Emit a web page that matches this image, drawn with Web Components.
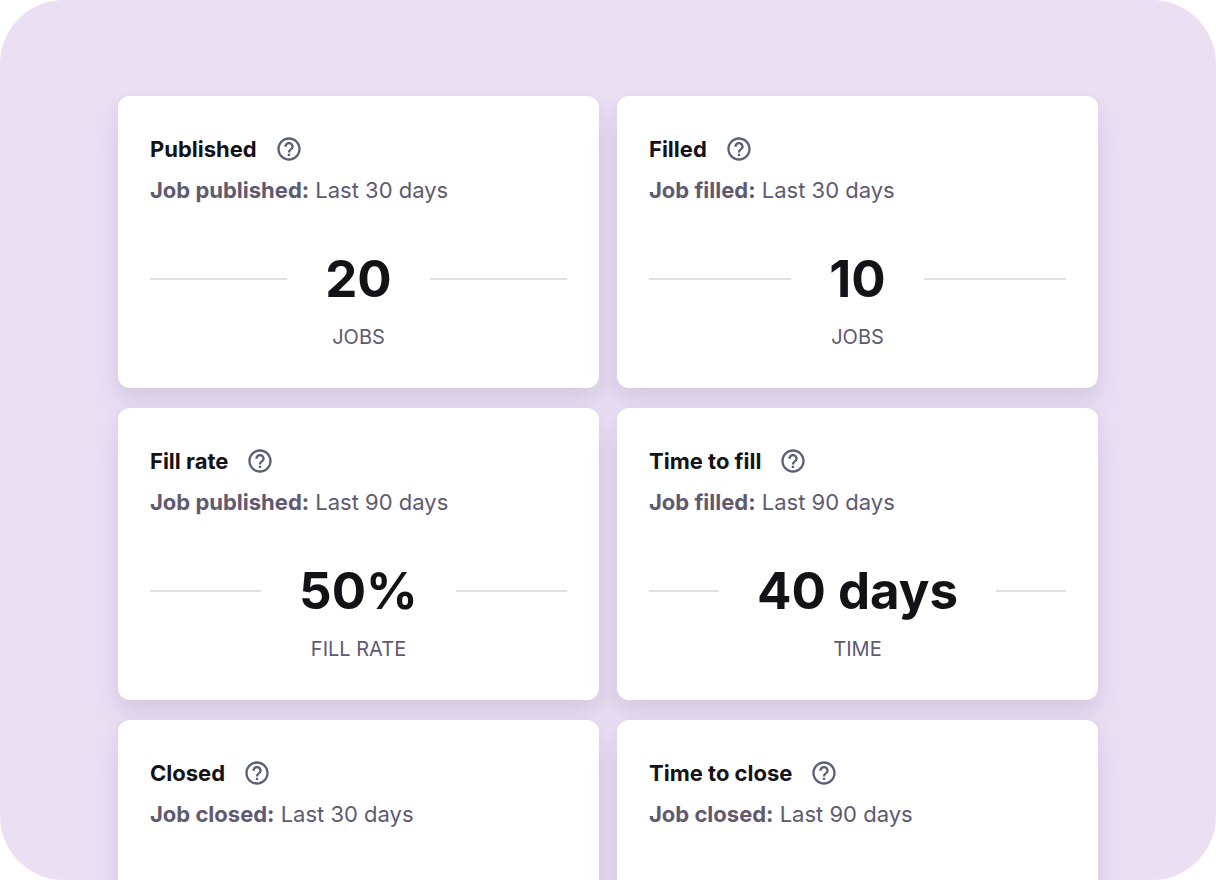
<!DOCTYPE html>
<html lang="en">
<head>
<meta charset="utf-8">
<meta name="viewport" content="width=device-width, initial-scale=1">
<title>Job metrics</title>
<style>
    html, body {
        margin: 0;
        height: 100%;
        background: #fff;
    }
    body {
        font-family: Inter, "Liberation Sans", sans-serif;
        color: #131217;
    }
</style>
</head>
<body>
<metric-board>
    <metric-card heading="Published" value="20" unit="JOBS"><b>Job published:</b> Last 30 days</metric-card>
    <metric-card heading="Filled" value="10" unit="JOBS"><b>Job filled:</b> Last 30 days</metric-card>
    <metric-card heading="Fill rate" value="50%" unit="FILL RATE"><b>Job published:</b> Last 90 days</metric-card>
    <metric-card heading="Time to fill" value="40 days" unit="TIME"><b>Job filled:</b> Last 90 days</metric-card>
    <metric-card heading="Closed"><b>Job closed:</b> Last 30 days</metric-card>
    <metric-card heading="Time to close"><b>Job closed:</b> Last 90 days</metric-card>
</metric-board>

<script>
const boardTemplate = document.createElement("template")
boardTemplate.innerHTML = /*html*/`
    <style>
        :host {
            display: block;
            box-sizing: border-box;
            height: 100vh;
            overflow: hidden;
            padding: 96px 118px 0;
            border-radius: 64px;
            background: #ebdff4;
        }
        #grid {
            display: grid;
            grid-template-columns: 1fr 1fr;
            gap: 20px 18px;
        }
    </style>
    <main id="grid"><slot></slot></main>
`

class MetricBoard extends HTMLElement
{
    constructor(){
        super()
        const shadow = this.attachShadow({mode: "open"})
        shadow.append(boardTemplate.content.cloneNode(true))
    }
}

const helpTemplate = document.createElement("template")
helpTemplate.innerHTML = /*html*/`
    <style>
        :host {
            display: inline-flex;
        }
        button {
            display: flex;
            padding: 0;
            border: 0;
            background: none;
            color: #5a6076;
            cursor: pointer;
        }
        svg {
            width: 28px;
            height: 28px;
        }
    </style>
    <button type="button">
        <svg viewBox="0 0 24 24" fill="currentColor" aria-hidden="true">
            <path d="M11 18h2v-2h-2v2zm1-16C6.48 2 2 6.48 2 12s4.48 10 10 10 10-4.48 10-10S17.52 2 12 2zm0 18c-4.41 0-8-3.59-8-8s3.59-8 8-8 8 3.59 8 8-3.59 8-8 8zm0-14c-2.21 0-4 1.79-4 4h2c0-1.1.9-2 2-2s2 .9 2 2c0 2-3 1.75-3 5h2c0-2.25 3-2.5 3-5 0-2.21-1.79-4-4-4z"/>
        </svg>
    </button>
`

class HelpButton extends HTMLElement
{
    constructor(){
        super()
        const shadow = this.attachShadow({mode: "open"})
        shadow.append(helpTemplate.content.cloneNode(true))
    }
    connectedCallback() {
        this.shadowRoot.querySelector("button").setAttribute("aria-label", this.getAttribute("label"))
    }
}

const cardTemplate = document.createElement("template")
cardTemplate.innerHTML = /*html*/`
    <style>
        :host {
            display: block;
            box-sizing: border-box;
            min-height: 292px;
            padding: 35px 32px;
            border-radius: 12px;
            background: #fff;
            box-shadow: 0 8px 16px rgba(50, 50, 93, 0.07), 0 20px 36px rgba(50, 50, 93, 0.07);
        }
        header {
            display: flex;
            align-items: center;
            gap: 18px;
            height: 36px;
        }
        h2 {
            margin: 0;
            font-size: 22px;
            line-height: 32px;
            font-weight: 700;
        }
        #period {
            margin: 7px 0 0;
            font-size: 22px;
            line-height: 32px;
            color: #5f5a70;
        }
        ::slotted(b) {
            font-weight: 700;
        }
        #figure {
            margin-top: 41px;
            text-align: center;
        }
        #row {
            display: flex;
            align-items: center;
            gap: 38px;
        }
        #row::before,
        #row::after {
            content: "";
            flex: 1;
            height: 2px;
            background: #e0dfe6;
        }
        #value {
            font-size: 51px;
            line-height: 64px;
            font-weight: 700;
        }
        #unit {
            margin-top: 12px;
            font-size: 20px;
            line-height: 28px;
            color: #5f5a70;
        }
        [hidden] {
            display: none;
        }
    </style>
    <header>
        <h2></h2>
        <help-button></help-button>
    </header>
    <p id="period"><slot></slot></p>
    <div id="figure">
        <div id="row"><span id="value"></span></div>
        <div id="unit"></div>
    </div>
`

class MetricCard extends HTMLElement
{
    constructor(){
        super()
        const shadow = this.attachShadow({mode: "open"})
        shadow.append(cardTemplate.content.cloneNode(true))
    }
    connectedCallback() {
        const heading = this.getAttribute("heading")
        this.shadowRoot.querySelector("h2").textContent = heading
        this.shadowRoot.querySelector("help-button").setAttribute("label", `About ${heading}`)
        this.shadowRoot.querySelector("#value").textContent = this.getAttribute("value")
        this.shadowRoot.querySelector("#unit").textContent = this.getAttribute("unit")
        // cards without a value only show their header
        this.shadowRoot.querySelector("#figure").hidden = !this.hasAttribute("value")
    }
}

customElements.define("metric-board", MetricBoard)
customElements.define("metric-card", MetricCard)
customElements.define("help-button", HelpButton)
</script>
</body>
</html>
